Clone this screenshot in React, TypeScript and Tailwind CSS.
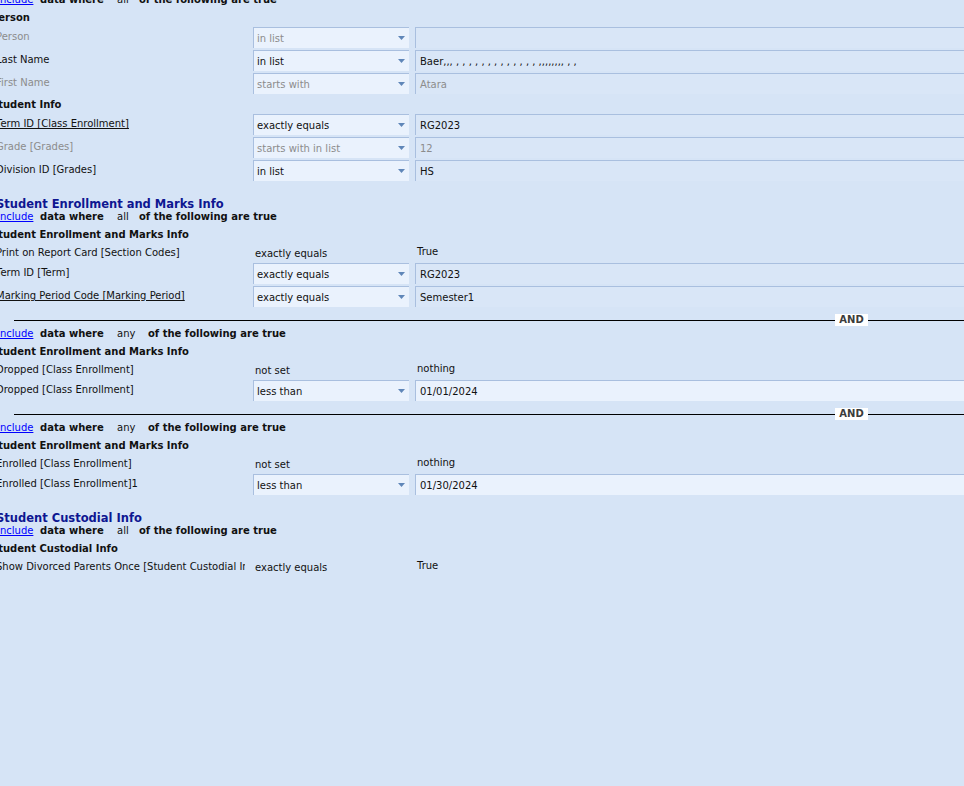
import React from 'react';

type Cond = {
  label: string;
  op: string;
  value: string;
  select?: boolean;
  dim?: boolean;
  underline?: boolean;
  lightValue?: boolean;
};

type Block = {
  mode: 'all' | 'any';
  group: string;
  rows: Cond[];
};

type Section = {
  title?: string;
  blocks: Block[];
};

const sections: Section[] = [
  {
    blocks: [
      {
        mode: 'all',
        group: 'Person',
        rows: [
          { label: 'Person', op: 'in list', value: '', select: true, dim: true },
          { label: 'Last Name', op: 'in list', value: 'Baer,,, , , , , , , , , , , , , , ,,,,,,,, , ,', select: true },
          { label: 'First Name', op: 'starts with', value: 'Atara', select: true, dim: true },
        ],
      },
      {
        mode: 'all',
        group: 'Student Info',
        rows: [
          { label: 'Term ID [Class Enrollment]', op: 'exactly equals', value: 'RG2023', select: true, underline: true },
          { label: 'Grade  [Grades]', op: 'starts with in list', value: '12', select: true, dim: true },
          { label: 'Division ID [Grades]', op: 'in list', value: 'HS', select: true },
        ],
      },
    ],
  },
  {
    title: 'Student Enrollment and Marks Info',
    blocks: [
      {
        mode: 'all',
        group: 'Student Enrollment and Marks Info',
        rows: [
          { label: 'Print on Report Card [Section Codes]', op: 'exactly equals', value: 'True' },
          { label: 'Term ID [Term]', op: 'exactly equals', value: 'RG2023', select: true },
          { label: 'Marking Period Code [Marking Period]', op: 'exactly equals', value: 'Semester1', select: true, underline: true },
        ],
      },
      {
        mode: 'any',
        group: 'Student Enrollment and Marks Info',
        rows: [
          { label: 'Dropped [Class Enrollment]', op: 'not set', value: 'nothing' },
          { label: 'Dropped [Class Enrollment]', op: 'less than', value: '01/01/2024', select: true, lightValue: true },
        ],
      },
      {
        mode: 'any',
        group: 'Student Enrollment and Marks Info',
        rows: [
          { label: 'Enrolled [Class Enrollment]', op: 'not set', value: 'nothing' },
          { label: 'Enrolled [Class Enrollment]1', op: 'less than', value: '01/30/2024', select: true, lightValue: true },
        ],
      },
    ],
  },
  {
    title: 'Student Custodial Info',
    blocks: [
      {
        mode: 'all',
        group: 'Student Custodial Info',
        rows: [
          { label: 'Show Divorced Parents Once [Student Custodial Info]', op: 'exactly equals', value: 'True' },
        ],
      },
    ],
  },
];

function IncludeRow({ mode }: { mode: 'all' | 'any' }) {
  return (
    <div className="flex h-[18px] items-center whitespace-nowrap pl-[1px]">
      <span className="w-[43px] shrink-0">
        <a href="#" className="text-[#0000ff] underline">
          Include
        </a>
      </span>
      <span className="w-[77px] shrink-0 font-bold">data where</span>
      <span className={`${mode === 'all' ? 'w-[22px]' : 'w-[31px]'} shrink-0`}>{mode}</span>
      <span className="font-bold">of the following are true</span>
    </div>
  );
}

function Arrow() {
  return (
    <svg width="7" height="4" viewBox="0 0 7 4" className="mr-[4px] shrink-0">
      <path d="M0 0H7L3.5 4Z" fill="#5f86b8" />
    </svg>
  );
}

function ConditionRow({ row }: { row: Cond }) {
  const text = row.dim ? 'text-[#8c8c8c]' : 'text-[#111]';
  const label = (
    <div
      className={`w-[249px] shrink-0 overflow-hidden whitespace-nowrap ${text} ${row.underline ? 'underline' : ''} ${
        row.select ? 'leading-[22px]' : 'leading-[19px]'
      }`}
    >
      {row.label}
    </div>
  );

  if (!row.select) {
    return (
      <div className="flex h-[19px] items-start">
        {label}
        <div className="ml-[10px] w-[162px] shrink-0 leading-[21px]">{row.op}</div>
        <div className="leading-[18px]">{row.value}</div>
      </div>
    );
  }

  return (
    <div className="flex h-[23px] items-start">
      {label}
      <div className="ml-[8px] mt-[1px] flex h-[21px] w-[156px] shrink-0 items-center border-l border-t border-[#a9bfdf] bg-[#eaf2fd] pl-[3px]">
        <span className={`flex-1 ${row.dim ? 'text-[#8c8c8c]' : ''}`}>{row.op}</span>
        <Arrow />
      </div>
      <div
        className={`ml-[6px] mt-[1px] flex h-[21px] w-[700px] shrink-0 items-center border-l border-t border-[#a9bfdf] pl-[4px] ${
          row.lightValue ? 'bg-[#eaf2fd]' : 'bg-[#d9e6f7]'
        } ${row.dim ? 'text-[#8c8c8c]' : ''}`}
      >
        {row.value}
      </div>
    </div>
  );
}

function AndDivider() {
  return (
    <div className="h-[16px] pt-[6px]">
      <div className="flex h-[12px] items-center">
        <div className="ml-[18px] h-px w-[821px] bg-[#000]" />
        <div className="flex h-[12px] w-[33px] items-center justify-center bg-white text-[10px] font-bold leading-none text-[#3c3c3c]">
          AND
        </div>
        <div className="h-px flex-1 bg-[#000]" />
      </div>
    </div>
  );
}

export default function App() {
  return (
    <div className="h-screen w-full overflow-hidden bg-[#d6e4f6] font-['DejaVu_Sans',Verdana,sans-serif] text-[10px] text-[#111]">
      <div className="ml-[-4px] mt-[-10px] w-[1200px]">
        {sections.map((section, si) => (
          <div key={si}>
            {section.title && (
              <div className="mt-[14px] h-[11px] whitespace-nowrap text-[11.5px] font-bold leading-[17px] text-[#0e1691]">
                {section.title}
              </div>
            )}
            {section.blocks.map((block, bi) => (
              <div key={bi}>
                {bi > 0 && section.title && <AndDivider />}
                {(bi === 0 || section.title) && <IncludeRow mode={block.mode} />}
                <div className="ml-[-5px] flex h-[18px] items-center whitespace-nowrap pt-[1px] font-bold">{block.group}</div>
                {block.rows.map((row, ri) => (
                  <ConditionRow key={ri} row={row} />
                ))}
              </div>
            ))}
          </div>
        ))}
      </div>
    </div>
  );
}
